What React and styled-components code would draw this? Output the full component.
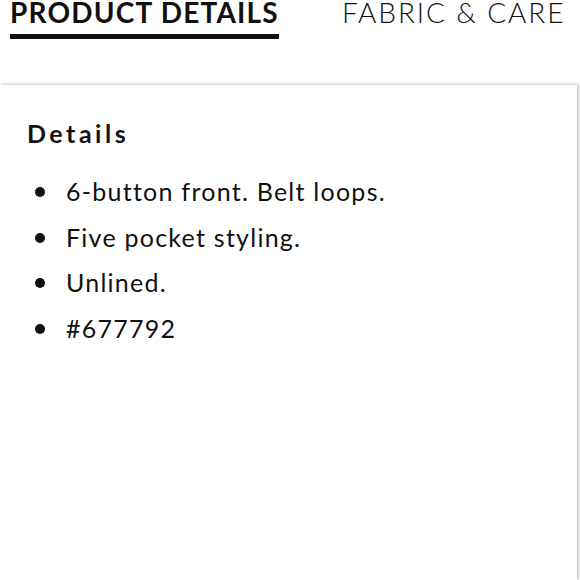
import styled, { createGlobalStyle } from "styled-components";

const GlobalStyle = createGlobalStyle`
  html, body {
    margin: 0;
    padding: 0;
    background: #ffffff;
    font-family: Lato, "Noto Sans", sans-serif;
    color: #111111;
    overflow: hidden;
  }
`;

const Page = styled.div`
  width: 580px;
  height: 580px;
  display: flex;
  flex-direction: column;
`;

const TabBar = styled.nav`
  display: flex;
  align-items: flex-start;
  gap: 63px;
  padding-left: 10px;
  height: 85px;
`;

const Tab = styled.div`
  font-size: 28px;
  line-height: 24px;
  letter-spacing: ${(p) => (p.active ? "1.2px" : "1.9px")};
  font-weight: ${(p) => (p.active ? 700 : 300)};
  color: #111;
  padding-bottom: 10px;
  border-bottom: 5px solid ${(p) => (p.active ? "#111" : "transparent")};
  white-space: nowrap;
`;

const Panel = styled.section`
  flex: 1;
  margin-right: 3px;
  background: #fff;
  box-shadow: 0 -1px 3px rgba(0, 0, 0, 0.12), 2px 0 3px rgba(0, 0, 0, 0.2);
  padding: 34px 0 0 27px;
`;

const Heading = styled.h3`
  margin: 0 0 22px;
  font-size: 25px;
  font-weight: 700;
  letter-spacing: 3.5px;
  line-height: 28px;
`;

const List = styled.ul`
  margin: 0;
  padding: 0;
  list-style: none;
`;

const Item = styled.li`
  display: flex;
  align-items: center;
  font-size: 25px;
  letter-spacing: 1.25px;
  line-height: 45.7px;
  &::before {
    content: "";
    flex: none;
    width: 10px;
    height: 10px;
    border-radius: 50%;
    background: #111;
    margin: 0 21px 0 8px;
  }
`;

const items = [
  "6-button front. Belt loops.",
  "Five pocket styling.",
  "Unlined.",
  "#677792",
];

export default function App() {
  return (
    <Page>
      <GlobalStyle />
      <TabBar>
        <Tab active>PRODUCT DETAILS</Tab>
        <Tab>FABRIC &amp; CARE</Tab>
      </TabBar>
      <Panel>
        <Heading>Details</Heading>
        <List>
          {items.map((t) => (
            <Item key={t}>{t}</Item>
          ))}
        </List>
      </Panel>
    </Page>
  );
}
